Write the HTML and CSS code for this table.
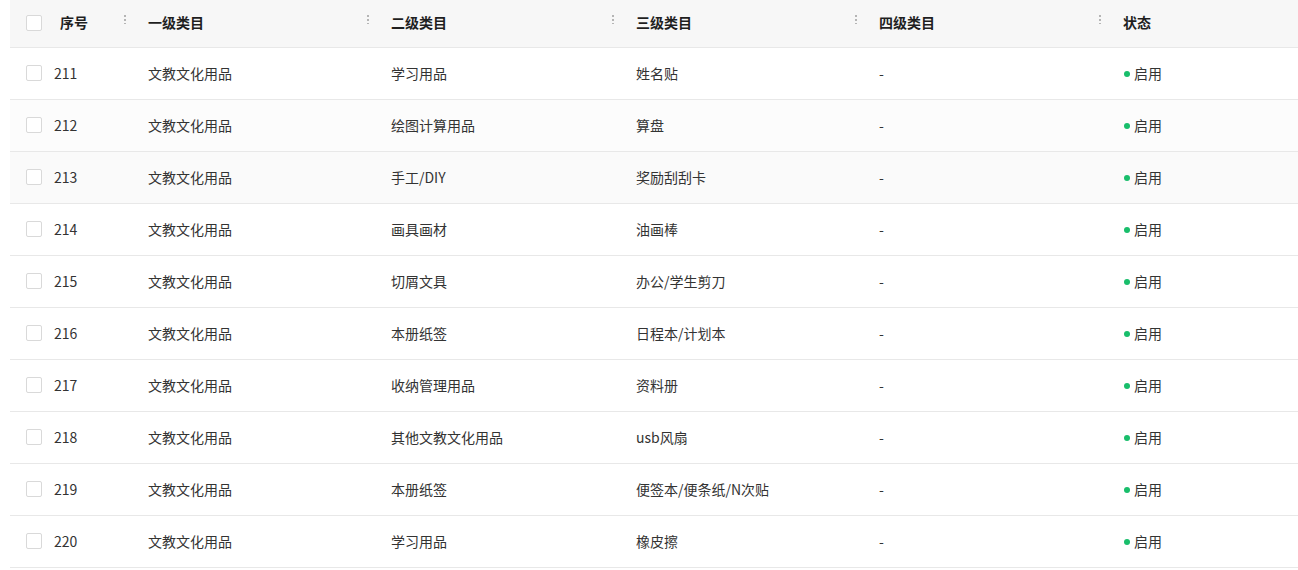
FILE: index.html
```html
<!DOCTYPE html>
<html lang="zh-CN">
<head>
<meta charset="utf-8">
<title>类目列表</title>
<link rel="stylesheet" href="styles.css">
</head>
<body>
<table class="grid">
  <colgroup>
    <col class="c-check"><col class="c-no"><col class="c-1"><col class="c-2"><col class="c-3"><col class="c-4"><col class="c-st">
  </colgroup>
  <thead>
    <tr>
      <th class="cell-check"><span class="box"></span></th>
      <th class="th-no">序号<span class="handle"></span></th>
      <th>一级类目<span class="handle"></span></th>
      <th>二级类目<span class="handle"></span></th>
      <th>三级类目<span class="handle"></span></th>
      <th>四级类目<span class="handle"></span></th>
      <th>状态</th>
    </tr>
  </thead>
  <tbody>
    <tr><td class="cell-check"><span class="box"></span></td><td class="td-no">211</td><td>文教文化用品</td><td>学习用品</td><td>姓名贴</td><td>-</td><td><span class="dot"></span>启用</td></tr>
    <tr class="soft"><td class="cell-check"><span class="box"></span></td><td class="td-no">212</td><td>文教文化用品</td><td>绘图计算用品</td><td>算盘</td><td>-</td><td><span class="dot"></span>启用</td></tr>
    <tr class="hover"><td class="cell-check"><span class="box"></span></td><td class="td-no">213</td><td>文教文化用品</td><td>手工/DIY</td><td>奖励刮刮卡</td><td>-</td><td><span class="dot"></span>启用</td></tr>
    <tr><td class="cell-check"><span class="box"></span></td><td class="td-no">214</td><td>文教文化用品</td><td>画具画材</td><td>油画棒</td><td>-</td><td><span class="dot"></span>启用</td></tr>
    <tr><td class="cell-check"><span class="box"></span></td><td class="td-no">215</td><td>文教文化用品</td><td>切屑文具</td><td>办公/学生剪刀</td><td>-</td><td><span class="dot"></span>启用</td></tr>
    <tr><td class="cell-check"><span class="box"></span></td><td class="td-no">216</td><td>文教文化用品</td><td>本册纸签</td><td>日程本/计划本</td><td>-</td><td><span class="dot"></span>启用</td></tr>
    <tr><td class="cell-check"><span class="box"></span></td><td class="td-no">217</td><td>文教文化用品</td><td>收纳管理用品</td><td>资料册</td><td>-</td><td><span class="dot"></span>启用</td></tr>
    <tr><td class="cell-check"><span class="box"></span></td><td class="td-no">218</td><td>文教文化用品</td><td>其他文教文化用品</td><td>usb风扇</td><td>-</td><td><span class="dot"></span>启用</td></tr>
    <tr><td class="cell-check"><span class="box"></span></td><td class="td-no">219</td><td>文教文化用品</td><td>本册纸签</td><td>便签本/便条纸/N次贴</td><td>-</td><td><span class="dot"></span>启用</td></tr>
    <tr><td class="cell-check"><span class="box"></span></td><td class="td-no">220</td><td>文教文化用品</td><td>学习用品</td><td>橡皮擦</td><td>-</td><td><span class="dot"></span>启用</td></tr>
  </tbody>
</table>
</body>
</html>
```

FILE: styles.css
```css
html, body {
  margin: 0;
  padding: 0;
  background: #ffffff;
}
body {
  padding-left: 10px;
  font-family: "Noto Sans CJK SC", "Noto Sans", sans-serif;
  font-size: 14px;
  color: #333333;
}
.grid {
  width: 1288px;
  border-collapse: collapse;
  table-layout: fixed;
}
.c-check { width: 36px; }
.c-no { width: 87px; }
.c-1 { width: 243px; }
.c-2 { width: 245px; }
.c-3 { width: 243px; }
.c-4 { width: 244px; }
.c-st { width: 190px; }

thead tr {
  height: 47px;
  background: #f7f7f7;
}
th {
  position: relative;
  text-align: left;
  font-weight: 700;
  color: #1f1f1f;
  padding: 0 0 2px 15px;
  line-height: 20px;
  border-bottom: 1px solid #e8e8e8;
  white-space: nowrap;
}
th.th-no { padding-left: 14px; }
td {
  padding: 0 0 1px 15px;
  line-height: 20px;
  height: 50px;
  border-bottom: 1px solid #e8e8e8;
  white-space: nowrap;
}
td.td-no { padding-left: 8px; }
.cell-check {
  padding: 0 0 0 16px;
  line-height: 0;
}
.box {
  display: inline-block;
  width: 14px;
  height: 14px;
  border: 1px solid #d9d9d9;
  border-radius: 2px;
  background: #ffffff;
  vertical-align: middle;
}
tr.soft { background: #fcfcfc; }
tr.hover { background: #fafafa; }

.handle {
  position: absolute;
  right: 7px;
  top: 14px;
  width: 2px;
  height: 10px;
  background-image: radial-gradient(circle, #b5b5b5 0.9px, transparent 1.1px);
  background-size: 2px 4px;
  background-repeat: repeat-y;
}
.dot {
  display: inline-block;
  width: 6px;
  height: 6px;
  border-radius: 50%;
  background: #19be6b;
  margin: 0 4px 2px 1px;
  vertical-align: middle;
}
```
